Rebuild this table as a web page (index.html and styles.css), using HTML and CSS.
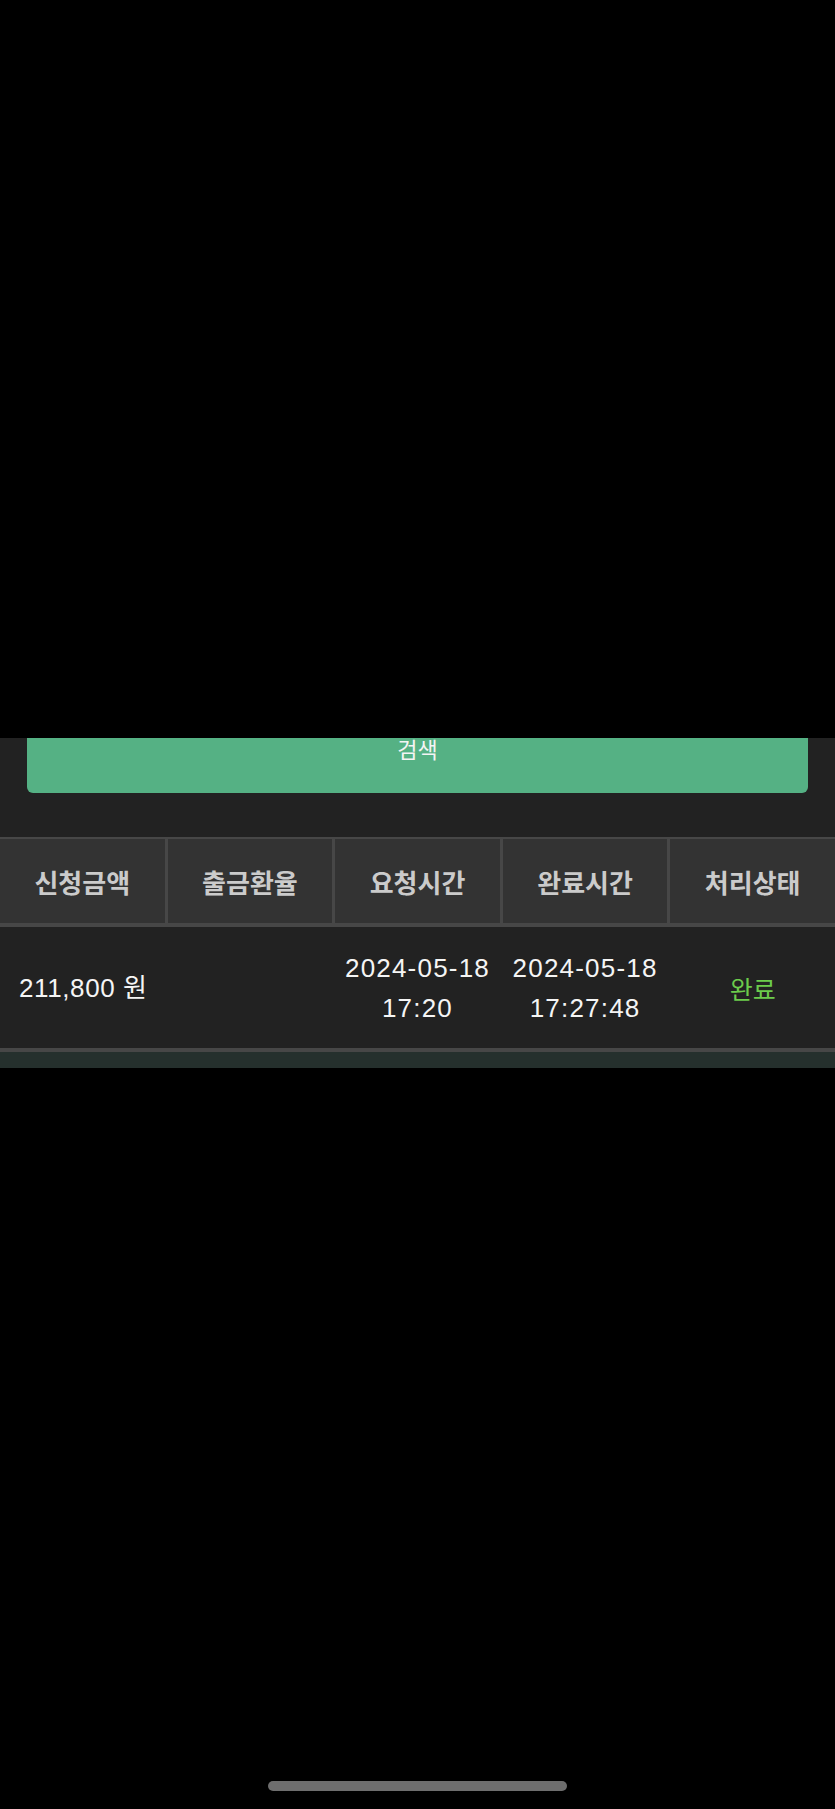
FILE: index.html
```html
<!DOCTYPE html>
<html lang="ko">
<head>
  <meta charset="UTF-8" />
  <meta name="viewport" content="width=device-width, initial-scale=1.0" />
  <title>출금내역</title>
  <link rel="stylesheet" href="styles.css">
</head>
<body>

<div class="top-shade"></div>

<div class="search-panel">
  <button class="search-btn">검색</button>
</div>

<div class="history">
  <div class="history-head">
    <div class="th">신청금액</div>
    <div class="th">출금환율</div>
    <div class="th">요청시간</div>
    <div class="th">완료시간</div>
    <div class="th">처리상태</div>
  </div>
  <div class="history-row">
    <div class="td amount">211,800 원</div>
    <div class="td"></div>
    <div class="td">2024-05-18<br>17:20</div>
    <div class="td">2024-05-18<br>17:27:48</div>
    <div class="td status-done">완료</div>
  </div>
</div>
<div class="history-foot"></div>

<div class="home-area">
  <div class="home-bar"></div>
</div>

</body>
</html>
```

FILE: styles.css
```css
    body {
      margin: 0;
      padding: 0;
      background: #000;
      font-family: 'Noto Sans CJK KR', 'Noto Sans', sans-serif;
      min-height: 100vh;
      display: flex;
      flex-direction: column;
    }

    .top-shade {
      height: 738px;
      background: #000;
    }

    .search-panel {
      background: #222222;
      padding: 0 27px 44px;
      overflow: hidden;
    }

    .search-btn {
      display: block;
      width: 100%;
      height: 90px;
      margin-top: -35px;
      padding: 0;
      border: none;
      border-radius: 6px;
      background: #55b184;
      color: #f4f4f4;
      font-family: 'Noto Sans CJK KR', sans-serif;
      font-size: 22px;
      line-height: 22px;
    }

    .history {
      border-top: 2px solid #474747;
    }

    .history-head {
      display: grid;
      grid-template-columns: repeat(5, 1fr);
      gap: 3px;
      background: #474747;
      border-bottom: 4px solid #474747;
    }

    .th {
      height: 84px;
      background: #333333;
      color: #cbcbcb;
      font-size: 26px;
      font-weight: 700;
      display: flex;
      align-items: center;
      justify-content: center;
    }

    .history-row {
      display: grid;
      grid-template-columns: repeat(5, 1fr);
      gap: 3px;
      min-height: 121px;
      background: #222222;
      border-bottom: 4px solid #474747;
    }

    .td {
      display: flex;
      align-items: center;
      justify-content: center;
      text-align: center;
      color: #f5f5f5;
      font-family: 'Liberation Sans', 'Noto Sans CJK KR', sans-serif;
      font-size: 26px;
      line-height: 40px;
      letter-spacing: 1.2px;
    }

    .amount {
      justify-content: flex-start;
      padding-left: 19px;
      letter-spacing: 0.6px;
    }

    .status-done {
      color: #6ccb4c;
      font-family: 'Noto Sans CJK KR', sans-serif;
      font-size: 25px;
      letter-spacing: 0;
    }

    .history-foot {
      height: 16px;
      background: #25302d;
    }

    .home-area {
      margin-top: auto;
      padding-bottom: 18px;
    }

    .home-bar {
      width: 299px;
      height: 10px;
      margin: 0 auto;
      border-radius: 5px;
      background: #6e6e6e;
    }
```
